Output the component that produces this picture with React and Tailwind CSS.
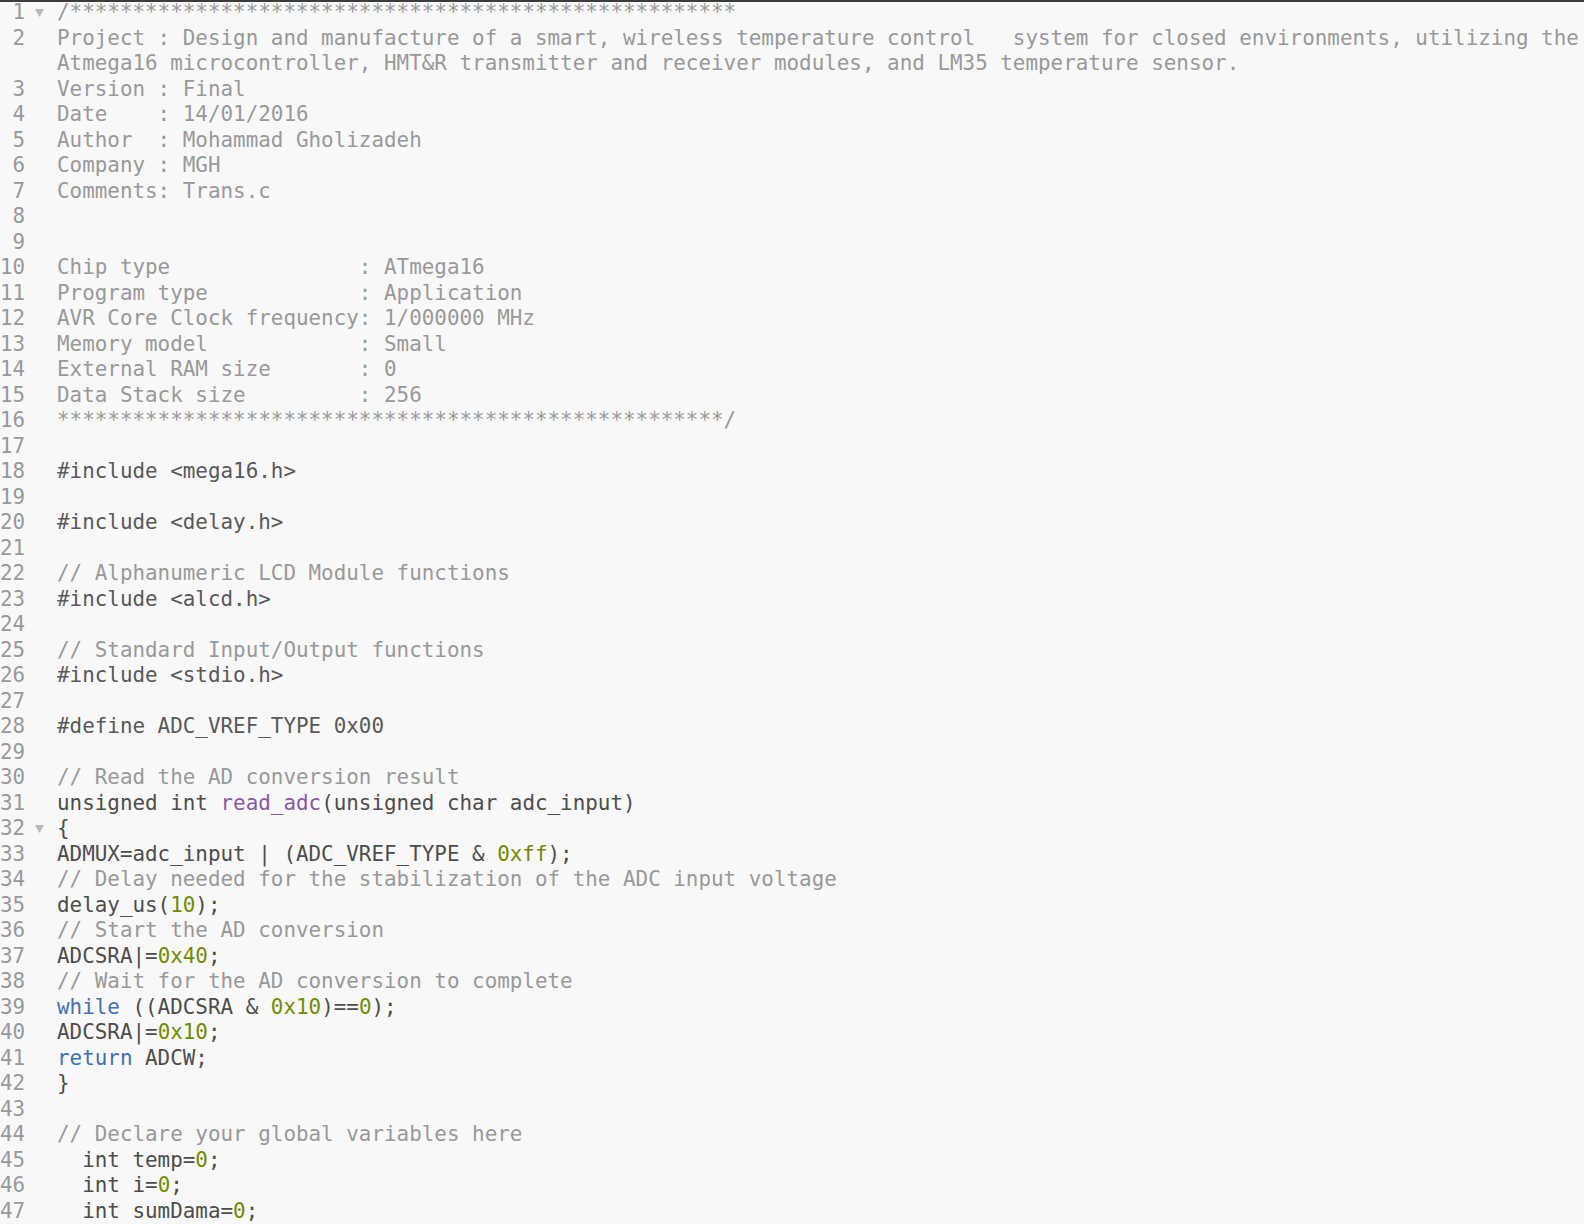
import React from "react";

const C = "text-[#999999]"; // comment
const P = "text-[#595959]"; // preprocessor
const T = "text-[#4d4d4c]"; // plain code
const N = "text-[#718c00]"; // number
const K = "text-[#4271ae]"; // keyword
const F = "text-[#8959a8]"; // function name

const stars = "*".repeat(53);

// each line: list of [className, text]; "wrap" holds a continuation row
const lines = [
  { fold: true, parts: [[C, "/" + stars]] },
  {
    parts: [[C, "Project : Design and manufacture of a smart, wireless temperature control   system for closed environments, utilizing the"]],
    wrap: [[C, "Atmega16 microcontroller, HMT&R transmitter and receiver modules, and LM35 temperature sensor."]],
  },
  { parts: [[C, "Version : Final"]] },
  { parts: [[C, "Date    : 14/01/2016"]] },
  { parts: [[C, "Author  : Mohammad Gholizadeh"]] },
  { parts: [[C, "Company : MGH"]] },
  { parts: [[C, "Comments: Trans.c"]] },
  { parts: [] },
  { parts: [] },
  { parts: [[C, "Chip type               : ATmega16"]] },
  { parts: [[C, "Program type            : Application"]] },
  { parts: [[C, "AVR Core Clock frequency: 1/000000 MHz"]] },
  { parts: [[C, "Memory model            : Small"]] },
  { parts: [[C, "External RAM size       : 0"]] },
  { parts: [[C, "Data Stack size         : 256"]] },
  { parts: [[C, stars + "/"]] },
  { parts: [] },
  { parts: [[P, "#include <mega16.h>"]] },
  { parts: [] },
  { parts: [[P, "#include <delay.h>"]] },
  { parts: [] },
  { parts: [[C, "// Alphanumeric LCD Module functions"]] },
  { parts: [[P, "#include <alcd.h>"]] },
  { parts: [] },
  { parts: [[C, "// Standard Input/Output functions"]] },
  { parts: [[P, "#include <stdio.h>"]] },
  { parts: [] },
  { parts: [[P, "#define ADC_VREF_TYPE 0x00"]] },
  { parts: [] },
  { parts: [[C, "// Read the AD conversion result"]] },
  { parts: [[T, "unsigned int "], [F, "read_adc"], [T, "(unsigned char adc_input)"]] },
  { fold: true, parts: [[T, "{"]] },
  { parts: [[T, "ADMUX=adc_input | (ADC_VREF_TYPE & "], [N, "0xff"], [T, ");"]] },
  { parts: [[C, "// Delay needed for the stabilization of the ADC input voltage"]] },
  { parts: [[T, "delay_us("], [N, "10"], [T, ");"]] },
  { parts: [[C, "// Start the AD conversion"]] },
  { parts: [[T, "ADCSRA|="], [N, "0x40"], [T, ";"]] },
  { parts: [[C, "// Wait for the AD conversion to complete"]] },
  { parts: [[K, "while"], [T, " ((ADCSRA & "], [N, "0x10"], [T, ")=="], [N, "0"], [T, ");"]] },
  { parts: [[T, "ADCSRA|="], [N, "0x10"], [T, ";"]] },
  { parts: [[K, "return"], [T, " ADCW;"]] },
  { parts: [[T, "}"]] },
  { parts: [] },
  { parts: [[C, "// Declare your global variables here"]] },
  { parts: [[T, "  int temp="], [N, "0"], [T, ";"]] },
  { parts: [[T, "  int i="], [N, "0"], [T, ";"]] },
  { parts: [[T, "  int sumDama="], [N, "0"], [T, ";"]] },
];

function FoldArrow() {
  return (
    <svg width="9" height="8" viewBox="0 0 9 8" className="block">
      <path d="M0 0 H9 L4.5 8 Z" fill="#b8b8b8" />
    </svg>
  );
}

function Row({ num, fold, parts }) {
  return (
    <div className="flex h-[25.5px] items-center">
      <div className="w-[25px] text-right text-[#999999]">{num}</div>
      <div className="w-[32px] flex justify-start pl-[10px]">{fold && <FoldArrow />}</div>
      <div className="whitespace-pre">
        {parts.map(([cls, text], i) => (
          <span key={i} className={cls}>{text}</span>
        ))}
      </div>
    </div>
  );
}

export default function App() {
  return (
    <div
      className="min-h-screen w-full overflow-hidden bg-[#f8f8f8] border-t-2 border-[#3c3c3c] text-[20.9px] leading-[25.5px]"
      style={{ fontFamily: '"DejaVu Sans Mono", "Liberation Mono", monospace' }}
    >
      <div className="-mt-[2px]">
        {lines.map((l, i) => (
          <React.Fragment key={i}>
            <Row num={i + 1} fold={l.fold} parts={l.parts} />
            {l.wrap && <Row num="" parts={l.wrap} />}
          </React.Fragment>
        ))}
      </div>
    </div>
  );
}
